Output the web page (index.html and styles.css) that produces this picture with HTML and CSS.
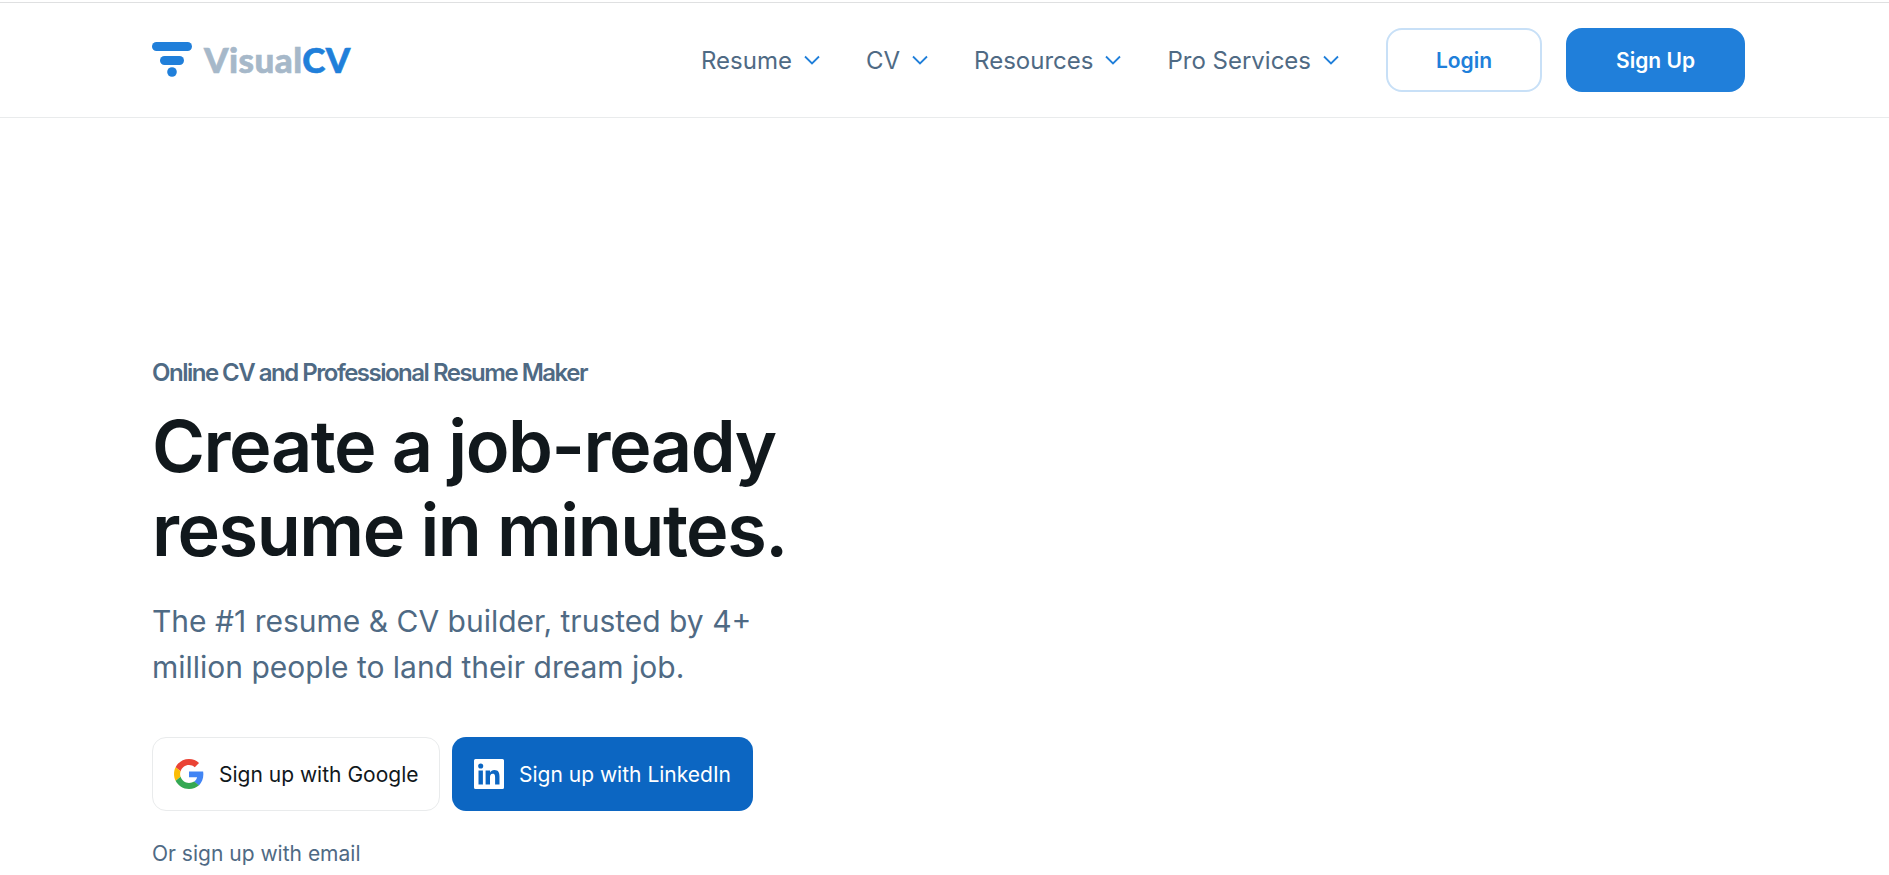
FILE: index.html
```html
<!DOCTYPE html>
<html lang="en">
<head>
<meta charset="utf-8">
<title>VisualCV</title>
<link rel="stylesheet" href="styles.css">
</head>
<body>
<header class="site-header">
  <div class="header-inner">
    <a class="logo" href="#">
      <svg class="logo-mark" viewBox="0 0 40 35" width="40" height="35" aria-hidden="true">
        <rect x="0" y="0" width="40" height="9" rx="4.500" fill="#207fda"/>
        <rect x="8" y="14" width="24" height="9" rx="4.500" fill="#207fda"/>
        <circle cx="20" cy="30" r="4.800" fill="#207fda"/>
      </svg>
      <span class="logo-text"><span class="logo-visual">Visual</span><span class="logo-cv">CV</span></span>
    </a>
    <nav class="nav">
      <a class="nav-item" href="#">Resume <svg class="chev" viewBox="0 0 16 10" width="16" height="10"><path d="M1 1.5l7 7 7-7"/></svg></a>
      <a class="nav-item" href="#">CV <svg class="chev" viewBox="0 0 16 10" width="16" height="10"><path d="M1 1.5l7 7 7-7"/></svg></a>
      <a class="nav-item" href="#">Resources <svg class="chev" viewBox="0 0 16 10" width="16" height="10"><path d="M1 1.5l7 7 7-7"/></svg></a>
      <a class="nav-item" href="#">Pro Services <svg class="chev" viewBox="0 0 16 10" width="16" height="10"><path d="M1 1.5l7 7 7-7"/></svg></a>
    </nav>
    <div class="auth">
      <a class="btn btn-login" href="#">Login</a>
      <a class="btn btn-signup" href="#">Sign Up</a>
    </div>
  </div>
</header>
<main class="hero">
  <p class="eyebrow">Online CV and Professional Resume Maker</p>
  <h1 class="title">Create a job-ready<br>resume in minutes.</h1>
  <p class="lead">The #1 resume &amp; CV builder, trusted by 4+<br>million people to land their dream job.</p>
  <div class="social">
    <a class="social-btn google" href="#">
      <svg viewBox="0 0 48 48" width="30" height="30" aria-hidden="true">
        <path fill="#EA4335" d="M24 9.5c3.54 0 6.71 1.22 9.21 3.6l6.85-6.85C35.9 2.38 30.47 0 24 0 14.62 0 6.51 5.38 2.56 13.22l7.98 6.19C12.43 13.72 17.74 9.5 24 9.5z"/>
        <path fill="#4285F4" d="M46.98 24.55c0-1.57-.15-3.09-.38-4.55H24v9.02h12.94c-.58 2.96-2.26 5.48-4.78 7.18l7.73 6c4.51-4.18 7.09-10.36 7.09-17.65z"/>
        <path fill="#FBBC05" d="M10.53 28.59c-.48-1.45-.76-2.99-.76-4.59s.27-3.14.76-4.59l-7.98-6.19C.92 16.46 0 20.12 0 24c0 3.88.92 7.54 2.56 10.78l7.97-6.19z"/>
        <path fill="#34A853" d="M24 48c6.48 0 11.93-2.13 15.89-5.81l-7.73-6c-2.15 1.45-4.92 2.3-8.16 2.3-6.26 0-11.57-4.22-13.47-9.91l-7.98 6.19C6.51 42.62 14.62 48 24 48z"/>
      </svg>
      <span>Sign up with Google</span>
    </a>
    <a class="social-btn linkedin" href="#">
      <svg viewBox="0 0 30 30" width="30" height="30" aria-hidden="true">
        <path fill="#fff" fill-rule="evenodd" d="M1.5 0h27A1.5 1.5 0 0 1 30 1.500v27a1.500 1.500 0 0 1-1.500 1.500h-27A1.500 1.500 0 0 1 0 28.500v-27A1.500 1.500 0 0 1 1.500 0zM4.500 11.500v14h4.400v-14zM6.700 4.500a2.550 2.550 0 1 0 0 5.100 2.550 2.550 0 0 0 0-5.100zM11.600 11.500v14H16v-7c0-1.900.4-3.700 2.700-3.700s2.400 2.100 2.400 3.800v6.900h4.400v-7.700c0-3.800-.8-6.700-5.200-6.700-2.100 0-3.500 1.200-4.100 2.300h-.1v-1.900z"/>
      </svg>
      <span>Sign up with LinkedIn</span>
    </a>
  </div>
  <p class="email-note">Or sign up with email</p>
</main>
</body>
</html>
```
FILE: styles.css
```css
* { box-sizing: border-box; }
html, body { margin: 0; padding: 0; height: 100%; overflow: hidden; }
body {
  background: #fff;
  font-family: Inter, "Liberation Sans", sans-serif;
  padding-top: 2px;
  height: 875px;
}
a { text-decoration: none; color: inherit; }
.site-header { height: 116px; border-top: 1px solid #dfe0e1; border-bottom: 1px solid #e9ebec; }
.header-inner {
  height: 100%;
  padding: 0 144px 0 152px;
  display: flex;
  align-items: center;
  justify-content: space-between;
}
.logo { display: flex; align-items: center; gap: 12px; }
.logo-mark { display: block; margin-top: -2px; }
.logo-text {
  font-family: Lato, sans-serif;
  font-weight: 900;
  font-size: 35px;
  line-height: 40px;
  letter-spacing: .45px;
  margin-top: -2px;
  -webkit-text-stroke: .6px currentColor;
}
.logo-visual { color: #a6b8c9; }
.logo-cv { color: #207fda; }
.nav { display: flex; gap: 46px; margin-left: auto; margin-right: 47px; color: #4f6a84; font-size: 24px; }
.nav-item { display: flex; align-items: center; gap: 12px; }
.chev { fill: none; stroke: #207fda; stroke-width: 1.8; }
.auth { display: flex; gap: 24px; }
.btn {
  height: 64px;
  display: flex;
  align-items: center;
  justify-content: center;
  border-radius: 16px;
  font-size: 21px;
  font-weight: 600;
}
.btn-login { width: 156px; border: 2px solid #c8e0f7; color: #207fda; }
.btn-signup { width: 179px; background: #207fda; color: #fff; }
.hero { padding: 0 0 0 152px; }
.eyebrow {
  margin: 240px 0 0;
  font-size: 24px;
  line-height: 30px;
  font-weight: 600;
  color: #4f6a84;
  letter-spacing: -1.5px;
}
.title {
  margin: 16px 0 0;
  font-size: 72px;
  line-height: 84px;
  font-weight: 600;
  color: #11181c;
  letter-spacing: -1.48px;
}
.lead {
  margin: 26px 0 0;
  font-size: 30px;
  line-height: 46px;
  font-weight: 400;
  color: #4f6a84;
}
.social { display: flex; gap: 12px; margin-top: 47px; }
.social-btn {
  height: 74px;
  display: flex;
  align-items: center;
  gap: 15px;
  border-radius: 14px;
  font-size: 21px;
}
.google { width: 288px; padding-left: 21px; border: 1px solid #e9ebec; color: #11181c; }
.linkedin { width: 301px; padding-left: 22px; background: #0c66c2; color: #fff; }
.email-note { margin: 29px 0 0; font-size: 21px; line-height: 28px; color: #4f6a84; }
```
